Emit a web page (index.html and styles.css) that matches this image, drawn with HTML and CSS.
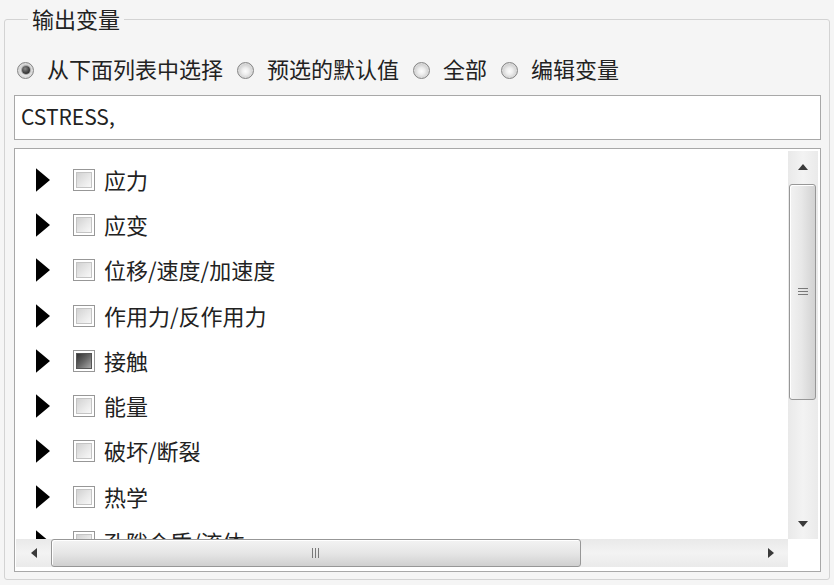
FILE: index.html
```html
<!DOCTYPE html>
<html lang="zh-CN">
<head>
<meta charset="utf-8">
<title>输出变量</title>
<link rel="stylesheet" href="styles.css">
</head>
<body>
<fieldset class="group">
  <legend class="group-title">输出变量</legend>
  <div class="radios">
    <label class="radio"><span class="radio-dot on"></span><span>从下面列表中选择</span></label>
    <label class="radio"><span class="radio-dot"></span><span>预选的默认值</span></label>
    <label class="radio"><span class="radio-dot"></span><span>全部</span></label>
    <label class="radio"><span class="radio-dot"></span><span>编辑变量</span></label>
  </div>
  <div class="textbox">CSTRESS,</div>
  <div class="list">
    <div class="items">
      <div class="item"><svg class="tri" viewBox="0 0 15 25"><polygon points="0,0 15,12.5 0,25"/></svg><span class="cb"></span><span class="label">应力</span></div>
      <div class="item"><svg class="tri" viewBox="0 0 15 25"><polygon points="0,0 15,12.5 0,25"/></svg><span class="cb"></span><span class="label">应变</span></div>
      <div class="item"><svg class="tri" viewBox="0 0 15 25"><polygon points="0,0 15,12.5 0,25"/></svg><span class="cb"></span><span class="label">位移/速度/加速度</span></div>
      <div class="item"><svg class="tri" viewBox="0 0 15 25"><polygon points="0,0 15,12.5 0,25"/></svg><span class="cb"></span><span class="label">作用力/反作用力</span></div>
      <div class="item"><svg class="tri" viewBox="0 0 15 25"><polygon points="0,0 15,12.5 0,25"/></svg><span class="cb partial"></span><span class="label">接触</span></div>
      <div class="item"><svg class="tri" viewBox="0 0 15 25"><polygon points="0,0 15,12.5 0,25"/></svg><span class="cb"></span><span class="label">能量</span></div>
      <div class="item"><svg class="tri" viewBox="0 0 15 25"><polygon points="0,0 15,12.5 0,25"/></svg><span class="cb"></span><span class="label">破坏/断裂</span></div>
      <div class="item"><svg class="tri" viewBox="0 0 15 25"><polygon points="0,0 15,12.5 0,25"/></svg><span class="cb"></span><span class="label">热学</span></div>
      <div class="item"><svg class="tri" viewBox="0 0 15 25"><polygon points="0,0 15,12.5 0,25"/></svg><span class="cb"></span><span class="label">孔隙介质/流体</span></div>
    </div>
    <div class="vscroll">
      <div class="arrow-btn"><svg class="arrow" viewBox="0 0 10 6"><polygon points="5,0 10,6 0,6"/></svg></div>
      <div class="vtrack">
        <div class="vthumb"><span class="grip-h"></span></div>
      </div>
      <div class="arrow-btn"><svg class="arrow" viewBox="0 0 10 6"><polygon points="0,0 10,0 5,6"/></svg></div>
    </div>
    <div class="hscroll">
      <div class="arrow-btn-h"><svg class="arrow-h" viewBox="0 0 6 10"><polygon points="6,0 6,10 0,5"/></svg></div>
      <div class="htrack">
        <div class="hthumb"><span class="grip-v"></span></div>
      </div>
      <div class="arrow-btn-h"><svg class="arrow-h" viewBox="0 0 6 10"><polygon points="0,0 6,5 0,10"/></svg></div>
    </div>
    <div class="corner"></div>
  </div>
</fieldset>
</body>
</html>
```
FILE: styles.css
```css
html, body {
  margin: 0;
  padding: 0;
  background: #f5f5f5;
}
body {
  font-family: "Noto Sans CJK SC", "Noto Sans", sans-serif;
  font-size: 22px;
  color: #222;
  width: 834px;
  height: 585px;
  overflow: hidden;
}
.group {
  margin: 6px 4px 6px 4px;
  padding: 23px 8px 7px 9px;
  border: 1px solid #d3d3d3;
  border-radius: 3px;
  min-width: 0;
}
.group-title {
  margin-left: 14px;
  padding: 0 4px;
  line-height: 26px;
  height: 26px;
  font-size: 22px;
  position: relative;
  top: -1px;
}
.radios {
  display: flex;
  align-items: center;
  height: 26px;
  padding-left: 3px;
  gap: 14px;
}
.radio {
  display: flex;
  align-items: center;
  gap: 13px;
  line-height: 26px;
}
.radio-dot {
  width: 17px;
  height: 17px;
  box-sizing: border-box;
  border-radius: 50%;
  border: 1px solid #858585;
  background: radial-gradient(circle at 50% 55%, #fdfdfd 0%, #eeeeee 30%, #c9c9c9 70%, #b4b4b4 100%);
  box-shadow: inset 0 0 0 1px #dedede;
  display: flex;
  align-items: center;
  justify-content: center;
  flex: none;
  position: relative;
  top: 2px;
}
.radio-dot.on::after {
  content: "";
  width: 8px;
  height: 8px;
  border-radius: 50%;
  background: radial-gradient(circle at 40% 35%, #8a8a8a 0%, #3c3c3c 60%, #1e1e1e 100%);
  box-shadow: 0 0 0 1px #a8a8a8;
}
.textbox {
  margin-top: 14px;
  height: 40px;
  padding: 0 0 3px 6px;
  border: 1px solid #a8a8a8;
  background: #fff;
  display: flex;
  align-items: center;
  font-size: 21px;
  color: #222;
}
.list {
  margin-top: 8px;
  height: 417px;
  border: 1px solid #a8a8a8;
  background: #fff;
  padding: 2px 2px 3px 1px;
  display: grid;
  grid-template-columns: 1fr 30px;
  grid-template-rows: 388px 28px;
}
.items {
  overflow: hidden;
  padding-top: 5px;
}
.item {
  height: 45.3px;
  display: flex;
  align-items: center;
}
.tri {
  width: 14px;
  height: 24px;
  margin-left: 20px;
  fill: #000;
  flex: none;
  position: relative;
  top: 1px;
}
.cb {
  width: 22px;
  height: 22px;
  margin-left: 23px;
  border: 1px solid #979797;
  background: #fff;
  box-sizing: border-box;
  padding: 2px;
  display: flex;
  flex: none;
  position: relative;
  top: 1px;
}
.cb::after {
  content: "";
  flex: 1;
  background: linear-gradient(135deg, #d2d2d2 0%, #e8e8e8 55%, #f8f8f8 100%);
  border: 1px solid #c4c4c4;
}
.cb.partial::after {
  background: linear-gradient(135deg, #333 0%, #666 50%, #a8a8a8 100%);
  border-color: #555;
}
.label {
  margin-left: 9px;
  line-height: 26px;
}
.vscroll {
  display: flex;
  flex-direction: column;
  background: linear-gradient(90deg, #e9e9e9, #f3f3f3 50%, #eaeaea);
}
.arrow-btn {
  height: 31px;
  display: flex;
  align-items: center;
  justify-content: center;
  flex: none;
}
.arrow {
  width: 10px;
  height: 6px;
  fill: #3a3a3a;
}
.vtrack {
  flex: 1;
  padding-top: 2px;
}
.vthumb {
  height: 214px;
  margin: 0 2px 0 1px;
  border: 1px solid #979797;
  border-radius: 3px;
  background: linear-gradient(90deg, #f2f2f2 0%, #e8e8e8 45%, #d2d2d2 100%);
  box-shadow: inset 1px 1px 0 #fff;
  display: flex;
  align-items: center;
  justify-content: center;
}
.grip-h {
  width: 10px;
  height: 9px;
  background: repeating-linear-gradient(180deg, #555 0 1px, transparent 1px 3px);
  opacity: 0.75;
}
.hscroll {
  display: flex;
  background: linear-gradient(180deg, #e9e9e9, #f3f3f3 50%, #eaeaea);
}
.arrow-btn-h {
  width: 35px;
  display: flex;
  align-items: center;
  justify-content: center;
  flex: none;
}
.arrow-h {
  width: 6px;
  height: 10px;
  fill: #3a3a3a;
}
.htrack {
  flex: 1;
}
.hthumb {
  width: 528px;
  height: 26px;
  border: 1px solid #979797;
  border-radius: 3px;
  background: linear-gradient(180deg, #f3f3f3 0%, #e6e6e6 50%, #d0d0d0 100%);
  box-shadow: inset 1px 1px 0 #fff;
  display: flex;
  align-items: center;
  justify-content: center;
}
.grip-v {
  width: 9px;
  height: 10px;
  background: repeating-linear-gradient(90deg, #555 0 1px, transparent 1px 3px);
  opacity: 0.75;
}
.corner {
  background: #fff;
}
```
